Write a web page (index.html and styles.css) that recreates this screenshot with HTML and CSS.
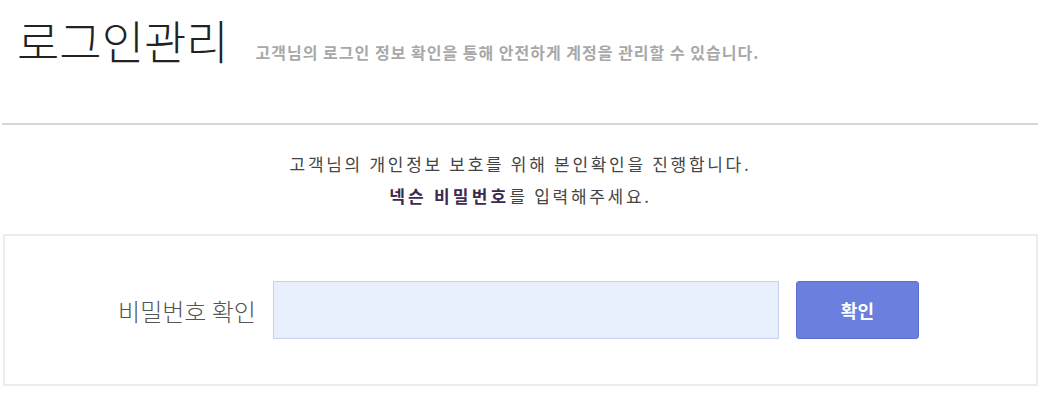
FILE: index.html
```html
<!DOCTYPE html>
<html>
<head>
    <link rel="stylesheet" href="styles.css">
</head>
<body>
    <div class="page">
        <div class="page-head">
            <h1 class="page-title">로그인관리</h1>
            <p class="page-desc">고객님의 로그인 정보 확인을 통해 안전하게 계정을 관리할 수 있습니다.</p>
        </div>
        <div class="notice">
            <p>고객님의 개인정보 보호를 위해 본인확인을 진행합니다.</p>
            <p><strong>넥슨 비밀번호</strong>를 입력해주세요.</p>
        </div>
        <div class="confirm-box">
            <label class="confirm-label" for="pw">비밀번호 확인</label>
            <input id="pw" class="confirm-input" type="password">
            <button class="confirm-btn">확인</button>
        </div>
    </div>
</body>
</html>
```

FILE: styles.css
```css
body {
    margin: 0;
    font-family: "Noto Sans CJK KR", "Noto Sans", sans-serif;
    background-color: #fff;
    color: #333;
}
.page {
    width: 1035px;
    margin-left: 3px;
}
.page-head {
    display: flex;
    align-items: baseline;
    height: 125px;
    padding-left: 15px;
    border-bottom: 2px solid #d6d6d6;
    box-sizing: border-box;
    width: 1036px;
    margin-left: -1px;
}
.page-title {
    margin: 6px 0 0 0;
    font-size: 46px;
    font-weight: 300;
    color: #222;
}
.page-desc {
    margin: 0 0 0 27px;
    font-size: 16px;
    font-weight: bold;
    color: #a8a8a8;
    letter-spacing: 1px;
}
.notice {
    margin-top: 23px;
    text-align: center;
    font-size: 17px;
    color: #444;
    letter-spacing: 2.7px;
}
.notice p {
    margin: 0;
    line-height: 32px;
}
.notice strong {
    color: #3b2a4d;
    letter-spacing: 3.2px;
}
.confirm-box {
    margin-top: 22px;
    height: 152px;
    box-sizing: border-box;
    border: 2px solid #ececec;
    display: flex;
    align-items: center;
    justify-content: center;
    padding-right: 4px;
}
.confirm-label {
    font-size: 24px;
    font-weight: 300;
    color: #555;
    margin-right: 17px;
}
.confirm-input {
    width: 506px;
    height: 58px;
    box-sizing: border-box;
    background-color: #e8f0fe;
    border: 1px solid #c5d2ef;
    margin: 0 17px 0 0;
}
.confirm-btn {
    width: 123px;
    height: 58px;
    background-color: #6b80de;
    color: #fff;
    border: 1px solid #5a6fcf;
    border-radius: 3px;
    font-family: "Noto Sans CJK KR", sans-serif;
    font-size: 18px;
    font-weight: bold;
}
```
